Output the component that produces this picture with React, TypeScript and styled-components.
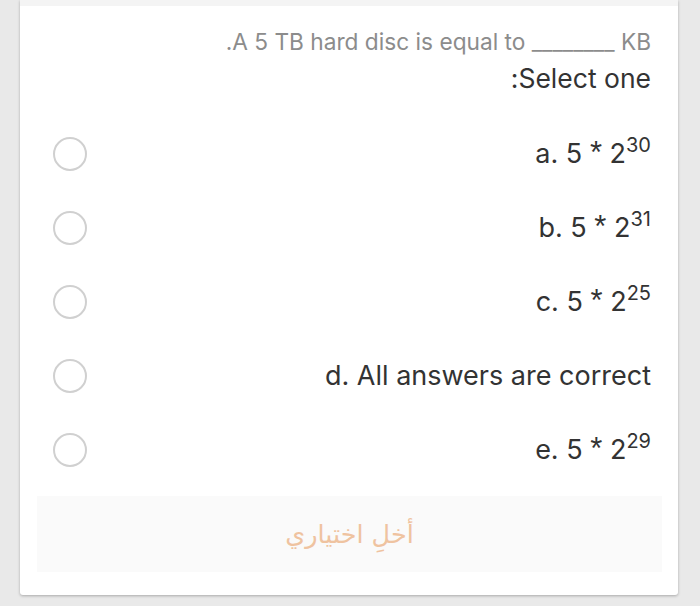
import styled, { createGlobalStyle } from "styled-components";

const GlobalStyle = createGlobalStyle`
  body {
    margin: 0;
    background-color: #e9e9e9;
    font-family: Inter, "Liberation Sans", sans-serif;
  }
`;

const options = [
  { letter: "a. 5", power: "30" },
  { letter: "b. 5", power: "31" },
  { letter: "c. 5", power: "25" },
  { letter: "", power: "", text: "d. All answers are correct" },
  { letter: "e. 5", power: "29" },
];

export default function App() {
  return (
    <>
      <GlobalStyle />
      <Page>
        <Card>
          <TopBand />
          <Question dir="rtl">A 5 TB hard disc is equal to ________ KB.</Question>
          <Prompt dir="rtl">Select one:</Prompt>
          <OptionList>
            {options.map((opt, i) => (
              <OptionRow key={i}>
                <Radio />
                {opt.text ? (
                  <OptionText>{opt.text}</OptionText>
                ) : (
                  <OptionText>
                    {opt.letter} <Star>*</Star> 2<Power>{opt.power}</Power>
                  </OptionText>
                )}
              </OptionRow>
            ))}
          </OptionList>
          <ClearBox>
            <ClearText dir="rtl">أخلِ اختياري</ClearText>
          </ClearBox>
        </Card>
      </Page>
    </>
  );
}

const Page = styled.div`
  padding: 0 22px 0 20px;
  height: 606px;
  box-sizing: border-box;
`;

const Card = styled.div`
  background-color: #ffffff;
  border-radius: 0 0 3px 3px;
  box-shadow: 0 1px 3px rgba(0, 0, 0, 0.28);
  padding-bottom: 23px;
  display: flex;
  flex-direction: column;
`;

const TopBand = styled.div`
  height: 6px;
  background-color: #f4f4f4;
`;

const Question = styled.div`
  margin-top: 22px;
  padding-right: 27px;
  font-size: 22.7px;
  line-height: 28px;
  color: #8c8c8c;
  text-align: right;
`;

const Prompt = styled.div`
  margin-top: 5px;
  padding-right: 27px;
  font-size: 26.5px;
  line-height: 34px;
  color: #333333;
  text-align: right;
`;

const OptionList = styled.div`
  margin-top: 22px;
  display: flex;
  flex-direction: column;
`;

const OptionRow = styled.div`
  height: 74px;
  display: flex;
  align-items: center;
  justify-content: space-between;
  padding: 0 27px 0 33px;
`;

const Radio = styled.div`
  width: 34px;
  height: 34px;
  box-sizing: border-box;
  border-radius: 50%;
  border: 2px solid #d0d0d0;
`;

const OptionText = styled.div`
  font-size: 27px;
  color: #333333;
  line-height: 34px;
`;

const Star = styled.span`
  font-family: "Liberation Sans", sans-serif;
  font-size: 31px;
  line-height: 0;
`;

const Power = styled.sup`
  font-size: 20px;
  vertical-align: 11px;
  line-height: 0;
`;

const ClearBox = styled.div`
  margin: 9px 16px 0 17px;
  height: 76px;
  background-color: #fafafa;
  display: flex;
  align-items: center;
  justify-content: center;
`;

const ClearText = styled.span`
  font-family: "DejaVu Sans", sans-serif;
  font-size: 25.5px;
  color: #efc3a0;
`;
